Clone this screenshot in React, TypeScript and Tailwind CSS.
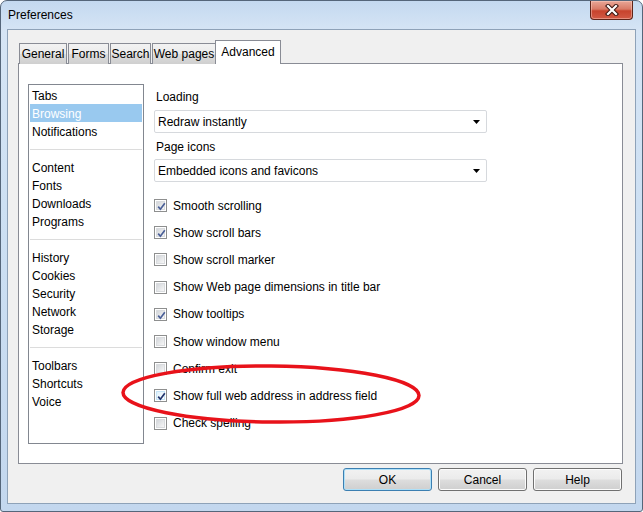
import React from 'react';

const tabs = [
  { label: 'General', w: 'w-[48px]' },
  { label: 'Forms', w: 'w-[41px]' },
  { label: 'Search', w: 'w-[41px]' },
  { label: 'Web pages', w: 'w-[64px]' },
];

const groups = [
  ['Tabs', 'Browsing', 'Notifications'],
  ['Content', 'Fonts', 'Downloads', 'Programs'],
  ['History', 'Cookies', 'Security', 'Network', 'Storage'],
  ['Toolbars', 'Shortcuts', 'Voice'],
];

const options = [
  { label: 'Smooth scrolling', checked: true },
  { label: 'Show scroll bars', checked: true },
  { label: 'Show scroll marker', checked: false },
  { label: 'Show Web page dimensions in title bar', checked: false },
  { label: 'Show tooltips', checked: true },
  { label: 'Show window menu', checked: false },
  { label: 'Confirm exit', checked: false },
  { label: 'Show full web address in address field', checked: true, focus: true },
  { label: 'Check spelling', checked: false },
];

function Checkbox({ checked, focus }: { checked: boolean; focus?: boolean }) {
  return (
    <div className="relative flex h-[13px] w-[13px] shrink-0 items-center justify-center border border-[#8e8f8f] bg-white">
      <div
        className={`h-[9px] w-[9px] border ${focus ? 'border-[#c6e4f7] bg-[linear-gradient(135deg,#dff1fc,#ffffff)]' : 'border-[#d9dbde] bg-[linear-gradient(135deg,#d3d6da,#f7f7f7)]'}`}
      />
      {checked && (
        <svg className="absolute left-[1px] top-[1px]" width="11" height="11" viewBox="0 0 11 11">
          <path d="M2.2 5.6 L4.4 8.2 L8.8 2.2" fill="none" stroke={focus ? '#21346d' : '#4a5f97'} strokeWidth="1.7" />
        </svg>
      )}
    </div>
  );
}

function Select({ value }: { value: string }) {
  return (
    <div className="flex h-[23px] w-[333px] items-center justify-between rounded-[2px] border border-[#d6d9dd] bg-white pl-[3px] pr-[6px]">
      <span>{value}</span>
      <svg width="7" height="4" viewBox="0 0 7 4">
        <path d="M0 0 H7 L3.5 4 Z" fill="#000" />
      </svg>
    </div>
  );
}

function DialogButton({ label, primary }: { label: string; primary?: boolean }) {
  return (
    <button
      type="button"
      className={`h-[23px] w-[89px] rounded-[3px] border bg-[linear-gradient(180deg,#f2f2f2_0%,#ebebeb_48%,#dddddd_52%,#cfcfcf_100%)] text-[12px] text-black ${primary ? 'border-[#3c7fb1] shadow-[inset_0_0_0_1px_#aee0f8]' : 'border-[#707070] shadow-[inset_0_0_0_1px_#fcfcfc]'}`}
    >
      {label}
    </button>
  );
}

export default function App() {
  return (
    <div
      className="relative flex h-[512px] w-[643px] flex-col rounded-t-[7px] rounded-b-[3px] border border-[#55667a] bg-[linear-gradient(180deg,#c4d9f0_0%,#d6e5f5_6%,#cde0f3_40%,#c3d7ee_100%)] text-[12px] text-black"
      style={{ fontFamily: '"Liberation Sans", Arial, sans-serif' }}
    >
      {/* title bar */}
      <div className="flex h-[28px] items-start justify-between pl-[7px] pr-[9px]">
        <span className="mt-[7px] leading-[14px]">Preferences</span>
        <div className="flex h-[19px] w-[43px] items-center justify-center rounded-b-[4px] border border-t-0 border-[#5e2419] bg-[linear-gradient(180deg,#e9a797_0%,#d97a66_45%,#c7432d_55%,#d25a45_100%)] shadow-[inset_0_0_0_1px_rgba(255,210,200,0.45)]">
          <svg width="14" height="12" viewBox="0 0 14 12">
            <path d="M3 2 L11 10 M11 2 L3 10" stroke="#3a1510" strokeWidth="4.2" strokeLinecap="square" />
            <path d="M3 2 L11 10 M11 2 L3 10" stroke="#ffffff" strokeWidth="2.2" strokeLinecap="square" />
          </svg>
        </div>
      </div>

      {/* client area */}
      <div className="ml-[6px] flex h-[475px] w-[629px] flex-col border border-[#8ea2b8] bg-[#f0f0f0] pl-[10px] pt-[10px]">
        <div className="relative z-10 -mb-px flex h-[24px] items-end pl-[1px]">
          {tabs.map((t) => (
            <div
              key={t.label}
              className={`${t.w} mr-[1px] flex h-[21px] items-center justify-center border border-b-0 border-[#898c95] bg-[linear-gradient(180deg,#f2f2f2_0%,#ebebeb_50%,#dddddd_51%,#cfcfcf_100%)] pb-[1px]`}
            >
              {t.label}
            </div>
          ))}
          <div className="-ml-[2px] flex h-[24px] w-[66px] items-center justify-center border border-b-0 border-[#898c95] bg-white pb-[1px]">
            Advanced
          </div>
        </div>

        <div className="flex h-[401px] w-[605px] border border-[#898c95] bg-white pl-[9px] pt-[20px]">
          {/* category list */}
          <div className="h-[360px] w-[116px] shrink-0 border border-[#828790] bg-white px-px pt-px">
            {groups.map((g, gi) => (
              <div key={gi}>
                {gi > 0 && (
                  <div className="flex h-[18px] items-center">
                    <div className="h-px w-full bg-[#dcdcdc]" />
                  </div>
                )}
                {g.map((item) => (
                  <div
                    key={item}
                    className={`flex h-[18px] items-center pl-[2px] pt-[2px] ${item === 'Browsing' ? 'bg-[#99c9ef] text-white' : ''}`}
                  >
                    {item}
                  </div>
                ))}
              </div>
            ))}
          </div>

          {/* settings */}
          <div className="ml-[10px] flex flex-col pt-[5px]">
            <div className="pl-[2px] leading-[16px]">Loading</div>
            <div className="mt-[5px]">
              <Select value="Redraw instantly" />
            </div>
            <div className="mt-[6px] pl-[2px] leading-[16px]">Page icons</div>
            <div className="mt-[4px]">
              <Select value="Embedded icons and favicons" />
            </div>
            <div className="mt-[10px] flex flex-col">
              {options.map((o) => (
                <div key={o.label} className="flex h-[27.2px] items-center gap-[6px]">
                  <Checkbox checked={o.checked} focus={o.focus} />
                  <span className="leading-[14px]">{o.label}</span>
                </div>
              ))}
            </div>
          </div>
        </div>

        <div className="mt-[4px] flex justify-end gap-[6px] pr-[13px]">
          <DialogButton label="OK" primary />
          <DialogButton label="Cancel" />
          <DialogButton label="Help" />
        </div>
      </div>

      {/* red annotation */}
      <svg className="pointer-events-none absolute left-[119px] top-[362px]" width="302" height="64" viewBox="0 0 302 64">
        <ellipse cx="151" cy="31" rx="148" ry="28" fill="none" stroke="#e8121a" strokeWidth="3.5" transform="rotate(0.6 151 31)" />
      </svg>
    </div>
  );
}
